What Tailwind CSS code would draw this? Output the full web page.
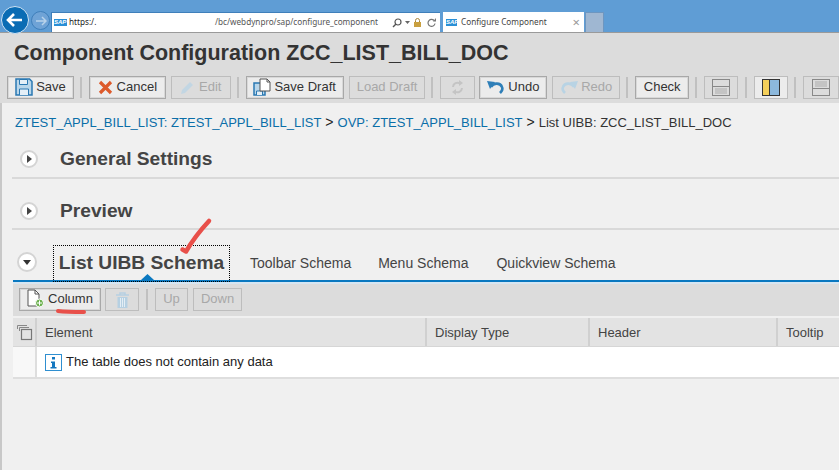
<!DOCTYPE html>
<html lang="en">
<head>
    <meta charset="UTF-8">
    <title>Configure Component</title>
    <script src="https://cdn.jsdelivr.net/npm/@tailwindcss/browser@4"></script>
</head>
<body class="w-[839px] h-[470px] overflow-hidden relative bg-[#f0f0f0] font-['Liberation_Sans',Arial,sans-serif] text-[#333]">

    <!-- Browser chrome -->
    <div class="h-[33px] bg-[#5f9dd5] border-b border-[#9a9a9a] flex items-end relative font-['Noto_Sans',sans-serif]">
        <div class="w-[28px] h-[28px] ml-[1px] mb-[-2px] rounded-full bg-[#0a6cb4] border border-[#cfe2f3] flex items-center justify-center z-10 shrink-0">
            <svg width="18" height="16" viewBox="0 0 18 16"><path d="M8 2 2 8l6 6M2.500 8H16" fill="none" stroke="#fff" stroke-width="2.600"/></svg>
        </div>
        <div class="w-[19px] h-[19px] ml-[2px] mb-[2px] rounded-full bg-[#6fa3d6] border border-[#3f7fba] flex items-center justify-center shrink-0">
            <svg width="12" height="10" viewBox="0 0 12 10"><path d="M7 1l4 4-4 4M11 5H1" fill="none" stroke="#b9d3ea" stroke-width="1.500"/></svg>
        </div>
        <div class="w-[389px] h-[20px] ml-[1px] bg-white border-t border-l border-[#3f7fba] flex items-center text-[8.200px] text-[#555] shrink-0 relative">
            <span class="w-[13px] h-[7px] ml-[2px] bg-[#2a8fd6] text-[6px] leading-[7px] text-white font-bold italic overflow-hidden font-['Liberation_Sans',sans-serif]">SAP</span>
            <span class="ml-[2px] text-[#222]">https:/.</span>
            <span class="absolute left-[163px] whitespace-nowrap">/bc/webdynpro/sap/configure_component</span>
            <svg class="absolute left-[340px]" width="10" height="10" viewBox="0 0 10 10"><circle cx="6" cy="4" r="3" fill="none" stroke="#555" stroke-width="1.200"/><path d="M4 6 1 9" stroke="#555" stroke-width="1.500"/></svg>
            <svg class="absolute left-[353px]" width="5" height="3" viewBox="0 0 5 3"><path d="M0 0h5L2.500 3z" fill="#666"/></svg>
            <svg class="absolute left-[362px]" width="7" height="9" viewBox="0 0 7 9"><rect y="4" width="7" height="5" fill="#c9a040"/><path d="M1.500 4V2.500a2 2 0 0 1 4 0V4" fill="none" stroke="#a8843a"/></svg>
            <svg class="absolute left-[375px]" width="9" height="9" viewBox="0 0 9 9"><path d="M7.500 3A3.500 3.500 0 1 0 8 5.500" fill="none" stroke="#777" stroke-width="1.200"/><path d="M6 3.500h3V0z" fill="#777"/></svg>
        </div>
        <div class="w-[141px] h-[20px] ml-[3px] bg-white flex items-center text-[8.200px] text-[#444] shrink-0">
            <span class="w-[11px] h-[7px] ml-[3px] bg-[#2a8fd6] text-[6px] leading-[7px] text-white font-bold italic overflow-hidden font-['Liberation_Sans',sans-serif]">SAP</span>
            <span class="ml-[4px] flex-1 whitespace-nowrap">Configure Component</span>
            <span class="mr-[4px] text-[13px] leading-none text-[#999]">×</span>
        </div>
        <div class="w-[19px] h-[20px] ml-[1px] bg-[#9fb7d2] border-x border-t border-[#6d96c0] shrink-0"></div>
    </div>

    <div class="h-[437px] border-l-2 border-[#c8c8c8]">
        <!-- Title and toolbar -->
        <div class="h-[70px] -ml-[2px] bg-[#dcdcdc] px-[7px]">
            <h1 class="pt-[8px] pl-[7px] text-[21.500px] leading-[25px] font-bold text-[#333] whitespace-nowrap">Component Configuration ZCC_LIST_BILL_DOC</h1>
            <div class="mt-[10px] w-[832px] flex items-center text-[13px] whitespace-nowrap">
                <button class="h-[23px] w-[67px] pb-[1px] border border-[#a8a8a8] bg-[#ececec] shadow-[inset_0_0_0_1px_#d8d8d8] flex items-center justify-center gap-[3px]">
                    <svg width="18" height="18" viewBox="0 0 18 18"><path d="M1 1h13.500L17 3.500V17H1z" fill="#b9d6ea" stroke="#2a78b2" stroke-width="1.500"/><path d="M4.500 1.500h8v5h-8z" fill="#e4eff7" stroke="#2a78b2"/><path d="M4.500 17v-6h9v6" fill="#e4eff7" stroke="#2a78b2"/></svg>Save
                </button>
                <i class="w-[2px] h-[21px] bg-[#c0c0c0] ml-[6px] mr-[7px]"></i>
                <button class="h-[23px] w-[77px] pb-[1px] border border-[#a8a8a8] bg-[#ececec] shadow-[inset_0_0_0_1px_#d8d8d8] flex items-center justify-center gap-[4px]">
                    <svg width="15" height="15" viewBox="0 0 15 15"><path d="M2 2l11 11M13 2 2 13" stroke="#dd5a2b" stroke-width="3.200"/></svg>Cancel
                </button>
                <button class="h-[23px] w-[60px] pb-[1px] ml-[5px] border border-[#bdbdbd] text-[#a8a8a8] flex items-center justify-center gap-[4px]">
                    <svg width="15" height="15" viewBox="0 0 15 15"><path d="M1 14l1-4 8-8 3 3-8 8z" fill="#c2d6e3"/></svg>Edit
                </button>
                <i class="w-[2px] h-[21px] bg-[#c0c0c0] ml-[6px] mr-[7px]"></i>
                <button class="h-[23px] w-[98px] pb-[1px] border border-[#a8a8a8] bg-[#ececec] shadow-[inset_0_0_0_1px_#d8d8d8] flex items-center justify-center gap-[3px]">
                    <svg width="18" height="18" viewBox="0 0 18 18"><path d="M1 5h11v12H1z" fill="#b9d6ea" stroke="#2a78b2" stroke-width="1.500"/><path d="M3.500 17v-4h6v4" fill="#e4eff7" stroke="#2a78b2"/><path d="M7 1h7l3 3v9H7z" fill="#fff" stroke="#555"/><path d="M14 1v3h3" fill="none" stroke="#555"/></svg>Save Draft
                </button>
                <button class="h-[23px] w-[77px] pb-[1px] ml-[5px] border border-[#bdbdbd] text-[#a8a8a8]">Load Draft</button>
                <i class="w-[2px] h-[21px] bg-[#c0c0c0] ml-[6px] mr-[7px]"></i>
                <button class="h-[23px] w-[35px] border border-[#bdbdbd] flex items-center justify-center">
                    <svg width="13" height="15" viewBox="0 0 13 15"><path d="M2 7a4.500 4.500 0 0 1 7-3.500M11 8a4.500 4.500 0 0 1-7 3.500" fill="none" stroke="#c4c4c4" stroke-width="2"/><path d="M8 0v6l4-3zM5 9v6l-4-3z" fill="#c4c4c4"/></svg>
                </button>
                <button class="h-[23px] w-[68px] pb-[1px] ml-[4px] border border-[#a8a8a8] bg-[#ececec] shadow-[inset_0_0_0_1px_#d8d8d8] flex items-center justify-center gap-[3px]">
                    <svg width="18" height="14" viewBox="0 0 18 14"><path d="M4 7c2-4 9-5 11 0 1 2 0 4-2 6" fill="none" stroke="#2f7fb8" stroke-width="2.600"/><path d="M0 1l8 1-5 7z" fill="#2f7fb8"/></svg>Undo
                </button>
                <button class="h-[23px] w-[68px] pb-[1px] ml-[5px] border border-[#bdbdbd] text-[#a8a8a8] flex items-center justify-center gap-[3px]">
                    <svg width="18" height="14" viewBox="0 0 18 14"><path d="M14 7C12 3 5 2 3 7c-1 2 0 4 2 6" fill="none" stroke="#b8d3e4" stroke-width="2.600"/><path d="M18 1l-8 1 5 7z" fill="#b8d3e4"/></svg>Redo
                </button>
                <i class="w-[2px] h-[21px] bg-[#c0c0c0] ml-[6px] mr-[7px]"></i>
                <button class="h-[23px] w-[54px] pb-[1px] border border-[#a8a8a8] bg-[#ececec] shadow-[inset_0_0_0_1px_#d8d8d8]">Check</button>
                <i class="w-[2px] h-[21px] bg-[#c0c0c0] ml-[6px] mr-[7px]"></i>
                <button class="h-[23px] w-[34px] border border-[#bdbdbd] flex items-center justify-center">
                    <svg width="18" height="17" viewBox="0 0 18 17"><rect x=".5" y=".5" width="17" height="16" fill="none" stroke="#888"/><rect x="3" y="9" width="12" height="6" fill="#c4c4c4"/><path d="M1 7.500h16" stroke="#888"/></svg>
                </button>
                <i class="w-[2px] h-[21px] bg-[#c0c0c0] ml-[7px] mr-[7px]"></i>
                <button class="h-[23px] w-[34px] border border-[#bdbdbd] bg-[#ececec] flex items-center justify-center">
                    <svg width="18" height="17" viewBox="0 0 18 17"><rect x=".5" y=".5" width="17" height="16" fill="none" stroke="#333"/><rect x="1" y="1" width="6" height="15" fill="#f4cf5a"/><rect x="8" y="1" width="9" height="15" fill="#8cb8dc"/><path d="M7.500 1v15" stroke="#333"/></svg>
                </button>
                <i class="w-[2px] h-[21px] bg-[#c0c0c0] ml-[6px] mr-[7px]"></i>
                <button class="h-[23px] w-[36px] border border-[#bdbdbd] flex items-center justify-center">
                    <svg width="18" height="17" viewBox="0 0 18 17"><rect x=".5" y=".5" width="17" height="16" fill="none" stroke="#888"/><rect x="3" y="2" width="12" height="6" fill="#c4c4c4"/><path d="M1 9.500h16" stroke="#888"/></svg>
                </button>
            </div>
        </div>

        <!-- Breadcrumb -->
        <div class="pt-[11px] pl-[13px] h-[34px] text-[13px] leading-[16px] text-[#0a6ea8] whitespace-nowrap">
            ZTEST_APPL_BILL_LIST: ZTEST_APPL_BILL_LIST <span class="text-[14px] text-[#222] mx-[0.500px]">&gt;</span> OVP: ZTEST_APPL_BILL_LIST <span class="text-[14px] text-[#222] mx-[0.500px]">&gt;</span> <span class="text-[#333]">List UIBB: ZCC_LIST_BILL_DOC</span>
        </div>

        <!-- Collapsed trays -->
        <div class="ml-[10px] h-[42px] border-b-2 border-[#d9d9d9] flex items-center pt-[4px]">
            <span class="w-[18px] h-[18px] ml-[8px] rounded-full bg-white border-2 border-[#d4d4d4] flex items-center justify-center">
                <svg width="5" height="8" viewBox="0 0 5 8"><path d="M0 0l5 4-5 4z" fill="#444"/></svg>
            </span>
            <h2 class="ml-[22px] text-[19.200px] font-bold text-[#444]">General Settings</h2>
        </div>
        <div class="ml-[10px] h-[51px] border-b-2 border-[#d9d9d9] flex items-center pt-[15px]">
            <span class="w-[18px] h-[18px] ml-[8px] rounded-full bg-white border-2 border-[#d4d4d4] flex items-center justify-center">
                <svg width="5" height="8" viewBox="0 0 5 8"><path d="M0 0l5 4-5 4z" fill="#444"/></svg>
            </span>
            <h2 class="ml-[22px] text-[19.200px] font-bold text-[#444]">Preview</h2>
        </div>

        <!-- Schema tabs -->
        <div class="ml-[11px] h-[52px] flex items-end border-b-2 border-[#0a78c0] relative">
            <span class="w-[20px] h-[20px] ml-[4px] mb-[8px] rounded-full bg-white border-2 border-[#d4d4d4] flex items-center justify-center">
                <svg width="8" height="5" viewBox="0 0 8 5"><path d="M0 0h8L4 5z" fill="#333"/></svg>
            </span>
            <div class="ml-[16px] -mb-[2px] w-[177px] h-[37px] border border-dotted border-black flex items-center justify-center text-[19.200px] font-bold text-[#444] whitespace-nowrap relative">
                List UIBB Schema
                <svg class="absolute left-[87px] bottom-[1px]" width="13" height="6" viewBox="0 0 13 6"><path d="M0 6 6.500 0 13 6z" fill="#0a78c0"/></svg>
            </div>
            <div class="flex items-center h-[34px] text-[14px] text-[#444] whitespace-nowrap">
                <span class="ml-[20px]">Toolbar Schema</span>
                <span class="ml-[27px]">Menu Schema</span>
                <span class="ml-[28px]">Quickview Schema</span>
            </div>
        </div>

        <!-- List toolbar -->
        <div class="ml-[11px] h-[34px] pb-[1px] bg-[#dcdcdc] flex items-center pl-[6px] text-[13px] border-t-2 border-[#d6e6f2]">
            <button class="h-[23px] w-[82px] pb-[2px] border border-[#a8a8a8] bg-[#ececec] shadow-[inset_0_0_0_1px_#d8d8d8] flex items-center justify-center gap-[3px]">
                <svg width="18" height="19" viewBox="0 0 18 19"><path d="M1 1h7l4 4v12H1z" fill="#fff" stroke="#555"/><path d="M8 1v4h4" fill="none" stroke="#555"/><circle cx="12.500" cy="14" r="4" fill="#6ab04c" stroke="#fff"/><path d="M10 14h5M12.500 11.500v5" stroke="#fff"/></svg>Column
            </button>
            <button class="h-[23px] w-[34px] ml-[4px] border border-[#bdbdbd] flex items-center justify-center">
                <svg width="15" height="16" viewBox="0 0 15 16"><path d="M1 3h13M5 3V1h5v2" fill="none" stroke="#b6d0e2" stroke-width="1.500"/><path d="M2.500 5h10v11h-10z" fill="#b6d0e2"/><path d="M5.500 6v9M7.500 6v9M9.500 6v9" stroke="#e4eef5"/></svg>
            </button>
            <i class="w-[2px] h-[21px] bg-[#c0c0c0] ml-[7px] mr-[7px]"></i>
            <button class="h-[23px] w-[33px] pb-[2px] border border-[#bdbdbd] text-[#a8a8a8]">Up</button>
            <button class="h-[23px] w-[49px] pb-[2px] ml-[5px] border border-[#bdbdbd] text-[#a8a8a8]">Down</button>
        </div>

        <!-- Table -->
        <div class="ml-[11px] mt-[2px] border-b-2 border-[#dedede]">
            <div class="h-[29px] flex bg-[#e3e3e3] border-b border-[#d6d6d6] text-[13px] text-[#444]">
                <div class="w-[24px] border-r-2 border-[#d0d0d0] flex items-center justify-center">
                    <svg width="17" height="17" viewBox="0 0 17 17"><path d="M1.500 5V1.500H11M3.500 7V3.500H13" fill="none" stroke="#888"/><rect x="5.500" y="5.500" width="10" height="10" fill="none" stroke="#777" stroke-width="1.200"/></svg>
                </div>
                <div class="w-[390px] pt-[1px] border-r-2 border-[#d0d0d0] flex items-center pl-[8px]">Element</div>
                <div class="w-[163px] pt-[1px] border-r-2 border-[#d0d0d0] flex items-center pl-[8px]">Display Type</div>
                <div class="w-[188px] pt-[1px] border-r-2 border-[#d0d0d0] flex items-center pl-[8px]">Header</div>
                <div class="flex-1 pt-[1px] flex items-center pl-[8px]">Tooltip</div>
            </div>
            <div class="h-[30px] flex bg-white text-[13px] text-[#222]">
                <div class="w-[24px] bg-[#f8f8f8] border-r-2 border-[#dedede]"></div>
                <div class="flex items-center pl-[8px] gap-[4px]">
                    <svg width="17" height="17" viewBox="0 0 17 17"><rect x=".5" y=".5" width="16" height="16" fill="#fff" stroke="#2f8fd0"/><rect x="7" y="3" width="3" height="2.500" fill="#1578c0"/><path d="M6 7.500h4V13h1.500v1.500h-6V13H7V9H6z" fill="#1578c0"/></svg>
                    The table does not contain any data
                </div>
            </div>
        </div>
    </div>

    <!-- Red annotation marks on top of the screenshot -->
    <svg class="absolute left-[175px] top-[214px] pointer-events-none" width="40" height="44" viewBox="0 0 40 44"><path d="M7.500 35.500l3.500 2Q20 22 34 7" fill="none" stroke="#e8504a" stroke-width="4.500" stroke-linecap="round" stroke-linejoin="round"/></svg>
    <svg class="absolute left-[54px] top-[307px] pointer-events-none" width="34" height="8" viewBox="0 0 34 8"><path d="M4 4c8 1 17 1 26 1" fill="none" stroke="#e8504a" stroke-width="4" stroke-linecap="round"/></svg>
</body>
</html>
